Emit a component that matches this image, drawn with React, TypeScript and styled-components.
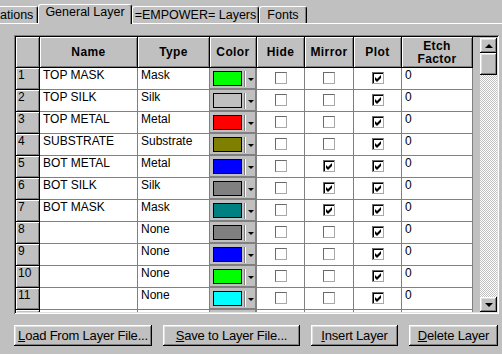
import React from "react";
import styled, { createGlobalStyle, css } from "styled-components";

const GlobalStyle = createGlobalStyle`
  html, body { margin: 0; padding: 0; background: #c0c0c0; }
  body { font-family: "Liberation Sans", Arial, sans-serif; }
  #root { width: 502px; height: 354px; overflow: hidden; }
`;

const raised = css`
  box-shadow: inset -1px -1px #000, inset 1px 1px #fff, inset -2px -2px #808080,
    inset 2px 2px #dfdfdf;
`;

const Window = styled.div`
  width: 502px;
  height: 354px;
  box-sizing: border-box;
  padding-top: 4px;
  background: #c0c0c0;
  display: flex;
  flex-direction: column;
  overflow: hidden;
  color: #000;
  font-size: 12px;
`;

const TabStrip = styled.div`
  display: flex;
  align-items: flex-end;
  height: 19px;
  position: relative;
  z-index: 2;
`;

const Tab = styled.div<{ $active?: boolean; $w: number; $cut?: boolean }>`
  box-sizing: border-box;
  flex: none;
  width: ${(p) => p.$w}px;
  height: ${(p) => (p.$active ? 20 : 17)}px;
  margin-bottom: ${(p) => (p.$active ? -1 : 0)}px;
  background: #c0c0c0;
  border-top: 1px solid #fff;
  border-left: ${(p) => (p.$cut ? "none" : "1px solid #fff")};
  border-right: 1px solid #000;
  box-shadow: inset -1px 0 #808080;
  border-radius: ${(p) => (p.$cut ? "0 2px 0 0" : "3px 3px 0 0")};
  font-size: 12.5px;
  line-height: 14px;
  padding-top: ${(p) => (p.$active ? 0 : 1)}px;
  text-align: ${(p) => (p.$cut ? "left" : "center")};
  white-space: nowrap;
  overflow: hidden;
`;

const Panel = styled.div`
  flex: 1;
  border-top: 1px solid #fff;
  display: flex;
  flex-direction: column;
  padding: 11px 0 0 14px;
  gap: 11px;
`;

const GridFrame = styled.div`
  box-sizing: border-box;
  width: 485px;
  height: 279px;
  padding: 2px;
  display: flex;
  background: #c0c0c0;
  box-shadow: inset 1px 1px #808080, inset -1px -1px #fff, inset 2px 2px #000,
    inset -2px -2px #dfdfdf;
`;

const Table = styled.div`
  width: 457px;
  height: 275px;
  overflow: hidden;
  display: grid;
  grid-template-columns: 24px 98px 72px 47px 48px 49px 48px 71px;
  grid-template-rows: 31px;
  grid-auto-rows: 22px;
  align-content: start;
`;

const HeadCell = styled.div`
  box-sizing: border-box;
  background: #c0c0c0;
  border-right: 1px solid #000;
  border-bottom: 1px solid #000;
  box-shadow: inset 1px 1px #fff, inset -1px -1px #808080;
  display: flex;
  align-items: center;
  justify-content: center;
  text-align: center;
  font-weight: bold;
  font-size: 12px;
  letter-spacing: 0.4px;
  line-height: 13px;
  padding-top: 1px;
`;

const RowHead = styled.div`
  box-sizing: border-box;
  background: #c0c0c0;
  border-right: 1px solid #000;
  border-bottom: 1px solid #000;
  box-shadow: inset 1px 1px #fff, inset -1px -1px #808080;
  padding-left: 2px;
  line-height: 14px;
`;

const Cell = styled.div`
  box-sizing: border-box;
  background: #fff;
  border-right: 1px solid #808080;
  border-bottom: 1px solid #808080;
  padding-left: 3px;
  line-height: 14px;
  white-space: nowrap;
  overflow: hidden;
`;

const CheckCell = styled.div`
  box-sizing: border-box;
  background: #fff;
  border-right: 1px solid #808080;
  border-bottom: 1px solid #808080;
  display: flex;
  justify-content: center;
  align-items: flex-start;
  padding-top: 4px;
`;

const Box = styled.span<{ $on: boolean }>`
  box-sizing: border-box;
  width: 12px;
  height: 12px;
  background: #fff;
  display: flex;
  align-items: center;
  justify-content: center;
  border-top: 1px solid #6a6a6a;
  border-left: 1px solid #6a6a6a;
  border-right: 1px solid #a8a8a8;
  border-bottom: 1px solid #a8a8a8;
  ${(p) =>
    p.$on &&
    css`
      box-shadow: inset 1px 1px #000;
      padding: 1px 0 0 1px;
    `}
`;

const ColorCell = styled.div`
  box-sizing: border-box;
  background: #c0c0c0;
  border-right: 1px solid #808080;
  border-bottom: 1px solid #808080;
  box-shadow: inset -1px -1px #808080;
  display: flex;
  align-items: flex-start;
  padding: 3px 0 0 3px;
`;

const Swatch = styled.span<{ $c: string }>`
  box-sizing: border-box;
  width: 29px;
  height: 15px;
  border: 1px solid #000;
  background: ${(p) => p.$c};
`;

const Divider = styled.span`
  width: 1px;
  height: 16px;
  margin-left: 3px;
  background: #fff;
  box-shadow: -1px 0 #808080;
`;

const Arrow = styled.span`
  margin: 7px 0 0 2px;
  width: 0;
  height: 0;
  border-left: 3px solid transparent;
  border-right: 3px solid transparent;
  border-top: 3px solid #000;
`;

const ScrollBar = styled.div`
  width: 17px;
  margin-left: auto;
  display: flex;
  flex-direction: column;
  padding-top: 1px;
`;

const ScrollBtn = styled.div`
  height: 15px;
  flex: none;
  background: #c0c0c0;
  ${raised};
  display: flex;
  align-items: center;
  justify-content: center;
`;

const ScrollArrow = styled.span<{ $up?: boolean }>`
  width: 0;
  height: 0;
  border-left: 4px solid transparent;
  border-right: 4px solid transparent;
  ${(p) =>
    p.$up ? "border-bottom: 4px solid #000;" : "border-top: 4px solid #000;"}
`;

const Thumb = styled.div`
  height: 22px;
  flex: none;
  background: #c0c0c0;
  ${raised};
`;

const Track = styled.div`
  flex: 1;
  background: repeating-conic-gradient(#c0c0c0 0% 25%, #fff 0% 50%) 0 0 / 2px
    2px;
`;

const ButtonRow = styled.div`
  display: flex;
  gap: 11px;
`;

const Button = styled.button<{ $w: number }>`
  width: ${(p) => p.$w}px;
  height: 21px;
  padding: 0;
  border: none;
  background: #c0c0c0;
  ${raised};
  font-family: "Liberation Sans", Arial, sans-serif;
  font-size: 13px;
  letter-spacing: -0.2px;
  color: #000;
  white-space: nowrap;
`;

const Key = styled.span`
  text-decoration: underline;
`;

type Row = {
  name: string;
  type: string;
  color: string;
  hide: boolean;
  mirror: boolean;
  plot: boolean;
};

const rows: Row[] = [
  { name: "TOP MASK", type: "Mask", color: "#00ff00", hide: false, mirror: false, plot: true },
  { name: "TOP SILK", type: "Silk", color: "#c0c0c0", hide: false, mirror: false, plot: true },
  { name: "TOP METAL", type: "Metal", color: "#ff0000", hide: false, mirror: false, plot: true },
  { name: "SUBSTRATE", type: "Substrate", color: "#808000", hide: false, mirror: false, plot: true },
  { name: "BOT METAL", type: "Metal", color: "#0000ff", hide: false, mirror: true, plot: true },
  { name: "BOT SILK", type: "Silk", color: "#808080", hide: false, mirror: true, plot: true },
  { name: "BOT MASK", type: "Mask", color: "#008080", hide: false, mirror: true, plot: true },
  { name: "", type: "None", color: "#808080", hide: false, mirror: false, plot: true },
  { name: "", type: "None", color: "#0000ff", hide: false, mirror: false, plot: true },
  { name: "", type: "None", color: "#00ff00", hide: false, mirror: false, plot: true },
  { name: "", type: "None", color: "#00ffff", hide: false, mirror: false, plot: true },
  { name: "", type: "None", color: "#ff00ff", hide: false, mirror: false, plot: true },
];

const Check = ({ on }: { on: boolean }) => (
  <Box $on={on}>
    {on && (
      <svg width="7" height="7" viewBox="0 0 7 7">
        <polygon points="0,2 2,4 6,0 6,3 2,7 0,5" fill="#000" />
      </svg>
    )}
  </Box>
);

export default function App() {
  return (
    <>
      <GlobalStyle />
      <Window>
        <TabStrip>
          <Tab $w={38} $cut>
            ations
          </Tab>
          <Tab $w={94} $active>
            General Layer
          </Tab>
          <Tab $w={127}>=EMPOWER= Layers</Tab>
          <Tab $w={48}>Fonts</Tab>
        </TabStrip>
        <Panel>
          <GridFrame>
            <Table>
              <HeadCell />
              <HeadCell>Name</HeadCell>
              <HeadCell>Type</HeadCell>
              <HeadCell>Color</HeadCell>
              <HeadCell>Hide</HeadCell>
              <HeadCell>Mirror</HeadCell>
              <HeadCell>Plot</HeadCell>
              <HeadCell>
                Etch
                <br />
                Factor
              </HeadCell>
              {rows.map((r, i) => (
                <React.Fragment key={i}>
                  <RowHead>{i + 1}</RowHead>
                  <Cell>{r.name}</Cell>
                  <Cell>{r.type}</Cell>
                  <ColorCell>
                    <Swatch $c={r.color} />
                    <Divider />
                    <Arrow />
                  </ColorCell>
                  <CheckCell>
                    <Check on={r.hide} />
                  </CheckCell>
                  <CheckCell>
                    <Check on={r.mirror} />
                  </CheckCell>
                  <CheckCell>
                    <Check on={r.plot} />
                  </CheckCell>
                  <Cell>0</Cell>
                </React.Fragment>
              ))}
            </Table>
            <ScrollBar>
              <ScrollBtn>
                <ScrollArrow $up />
              </ScrollBtn>
              <Thumb />
              <Track />
              <ScrollBtn>
                <ScrollArrow />
              </ScrollBtn>
            </ScrollBar>
          </GridFrame>
          <ButtonRow>
            <Button $w={138}>
              <Key>L</Key>oad From Layer File...
            </Button>
            <Button $w={137}>
              <Key>S</Key>ave to Layer File...
            </Button>
            <Button $w={87}>
              <Key>I</Key>nsert Layer
            </Button>
            <Button $w={89}>
              <Key>D</Key>elete Layer
            </Button>
          </ButtonRow>
        </Panel>
      </Window>
    </>
  );
}
